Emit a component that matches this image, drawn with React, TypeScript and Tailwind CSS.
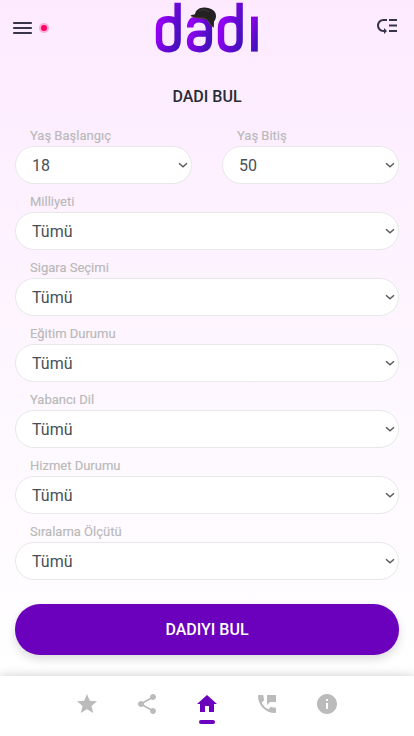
import React from 'react';
import { MdInfo, MdLowPriority, MdPermPhoneMsg, MdShare, MdStar } from 'react-icons/md';

interface SelectFieldProps {
  label: string;
  options: string[];
  defaultValue?: string;
}

const ages = Array.from({ length: 53 }, (_, index) => String(index + 18));

const filters = [
  'Milliyeti',
  'Sigara Seçimi',
  'Eğitim Durumu',
  'Yabancı Dil',
  'Hizmet Durumu',
  'Sıralama Ölçütü',
];

const HomeIcon: React.FC<{ className?: string }> = ({ className }) => (
  <svg className={className} viewBox="0 0 24 24" fill="currentColor">
    <path d="M10 20v-6h4v6h5v-8h3L12 3 2 12h3v8z" />
  </svg>
);

const navItems = [
  { name: 'favorites', icon: MdStar, active: false },
  { name: 'share', icon: MdShare, active: false },
  { name: 'home', icon: HomeIcon, active: true },
  { name: 'contact', icon: MdPermPhoneMsg, active: false },
  { name: 'info', icon: MdInfo, active: false },
];

const SelectField: React.FC<SelectFieldProps> = ({ label, options, defaultValue }) => (
  <label className="block h-[66px]">
    <span className="block h-5 pl-[15px] pt-px text-[13px] leading-[18px] text-[#b9b9b9] [-webkit-text-stroke:0.15px_#b9b9b9]">
      {label}
    </span>
    <div className="relative">
      <select
        defaultValue={defaultValue}
        className="block h-[38px] w-full appearance-none rounded-[19px] border border-[#e8e8e8] bg-white pt-[7px] pr-6 pb-[5px] pl-4 text-base text-[#495057]"
      >
        {options.map((option) => (
          <option key={option}>{option}</option>
        ))}
      </select>
      <svg
        className="pointer-events-none absolute right-1 top-4 text-[#5c5c5c]"
        width="10"
        height="6"
        viewBox="0 0 10 6"
        fill="none"
        stroke="currentColor"
        strokeWidth="1.5"
      >
        <path d="M1 1.2 5 4.8 9 1.2" />
      </svg>
    </div>
  </label>
);

const Logo: React.FC = () => (
  <svg width="106" height="56" viewBox="154 0 106 56" fill="none" aria-label="dadı">
    <defs>
      <linearGradient id="d1" gradientUnits="userSpaceOnUse" x1="158" y1="28" x2="181" y2="34">
        <stop stopColor="#9500f5" />
        <stop offset="1" stopColor="#4410bb" />
      </linearGradient>
      <linearGradient id="a" gradientUnits="userSpaceOnUse" x1="189" y1="28" x2="212" y2="34">
        <stop stopColor="#9500f5" />
        <stop offset="1" stopColor="#4410bb" />
      </linearGradient>
      <linearGradient id="d2" gradientUnits="userSpaceOnUse" x1="220" y1="28" x2="243" y2="34">
        <stop stopColor="#9500f5" />
        <stop offset="1" stopColor="#4410bb" />
      </linearGradient>
      <linearGradient id="i" gradientUnits="userSpaceOnUse" x1="251" y1="30" x2="259" y2="32">
        <stop stopColor="#8504e5" />
        <stop offset="1" stopColor="#4410bb" />
      </linearGradient>
    </defs>
    <g strokeWidth="6.4">
      <path
        stroke="url(#d1)"
        d="M177.6 2.8V40q0 9.2-9.2 9.2t-9.4-9.2V28.5q0-9.2 9.4-9.2t9.2 9.2"
      />
      <path
        stroke="url(#a)"
        d="M190.2 27.5q0-8.2 9.2-8.2t9.5 9.2v11.5q0 9.2-9.6 9.2t-9.2-8 9.2-7.6h9.6"
      />
      <path
        stroke="url(#d2)"
        d="M239.6 2.8V40q0 9.2-9.2 9.2t-9.4-9.2V28.5q0-9.2 9.4-9.2t9.2 9.2"
      />
    </g>
    <path fill="url(#i)" d="M251 16.6h6.8v35H251z" />
    {/* cap resting on the letter a */}
    <path
      fill="#242122"
      d="M190.5 15.2 195 14.2C195.5 10 199.5 7.2 204.5 7.4C211 7.4 216.5 11 216 16.5C215.8 18.7 215 20.5 214 21.5L213.8 27.5C211.5 27 209.5 24.5 208.5 21.5C206 19 201.5 18 197 18Q193 18 190.5 15.2Z"
    />
    <path
      stroke="#79503f"
      strokeWidth=".7"
      d="M191 16.5Q196 18.5 201 18T208.5 21.5Q210 26 213.5 27"
    />
    <path stroke="#454142" strokeWidth=".8" d="M199 11q5-3 10 1" />
  </svg>
);

const App: React.FC = () => {
  return (
    <div className="flex h-[736px] w-[414px] flex-col overflow-hidden bg-linear-to-b from-[#fdeaff] via-[#fdf3ff] via-[260px] to-white to-[676px] font-['Roboto',sans-serif]">
      <header className="flex h-14 shrink-0 items-start justify-between">
        <div className="flex h-14 w-[154px] items-center pl-[13px]">
          <button aria-label="Menü">
            <svg width="19" height="12" viewBox="0 0 19 12" fill="#38344a">
              <rect x=".2" width="18.6" height="2" />
              <rect x=".2" y="5" width="18.6" height="2" />
              <rect x=".2" y="10" width="18.6" height="2" />
            </svg>
          </button>
          <span className="ml-[7px] size-2.5 rounded-full border-2 border-[#ffabd3] bg-[#ff0066]" />
        </div>
        <Logo />
        <div className="flex w-[154px] justify-end pr-[15px] pt-3.5">
          <button aria-label="Filtrele">
            <MdLowPriority className="size-6 text-[#38344a]" />
          </button>
        </div>
      </header>

      <main className="h-[620px] shrink-0 px-[15px]">
        <h1 className="pt-[29px] text-center text-base leading-6 font-medium text-[#272b35]">
          DADI BUL
        </h1>

        <form className="pt-[17px]">
          <div className="grid grid-cols-2 gap-[30px]">
            <SelectField label="Yaş Başlangıç" options={ages} defaultValue="18" />
            <SelectField label="Yaş Bitiş" options={ages} defaultValue="50" />
          </div>

          {filters.map((label) => (
            <SelectField key={label} label={label} options={['Tümü']} />
          ))}

          <button
            type="button"
            className="mt-4 block h-[51px] w-full rounded-[25px] bg-[#6b00bd] text-base font-medium text-white shadow-[0_4px_10px_rgba(0,0,0,0.14)]"
          >
            DADIYI BUL
          </button>
        </form>
      </main>

      <nav className="flex h-[60px] shrink-0 justify-center bg-white shadow-[0_0_10px_rgba(0,0,0,0.2)]">
        {navItems.map(({ name, icon: Icon, active }) => (
          <button key={name} aria-label={name} className="flex w-[60px] flex-col items-center pt-4">
            <Icon className={active ? 'size-6 text-[#6b00bd]' : 'size-6 text-[#bbb]'} />
            {active && <span className="mt-1 h-1 w-4 rounded-full bg-[#6b00bd]" />}
          </button>
        ))}
      </nav>
    </div>
  );
};

export default App;
